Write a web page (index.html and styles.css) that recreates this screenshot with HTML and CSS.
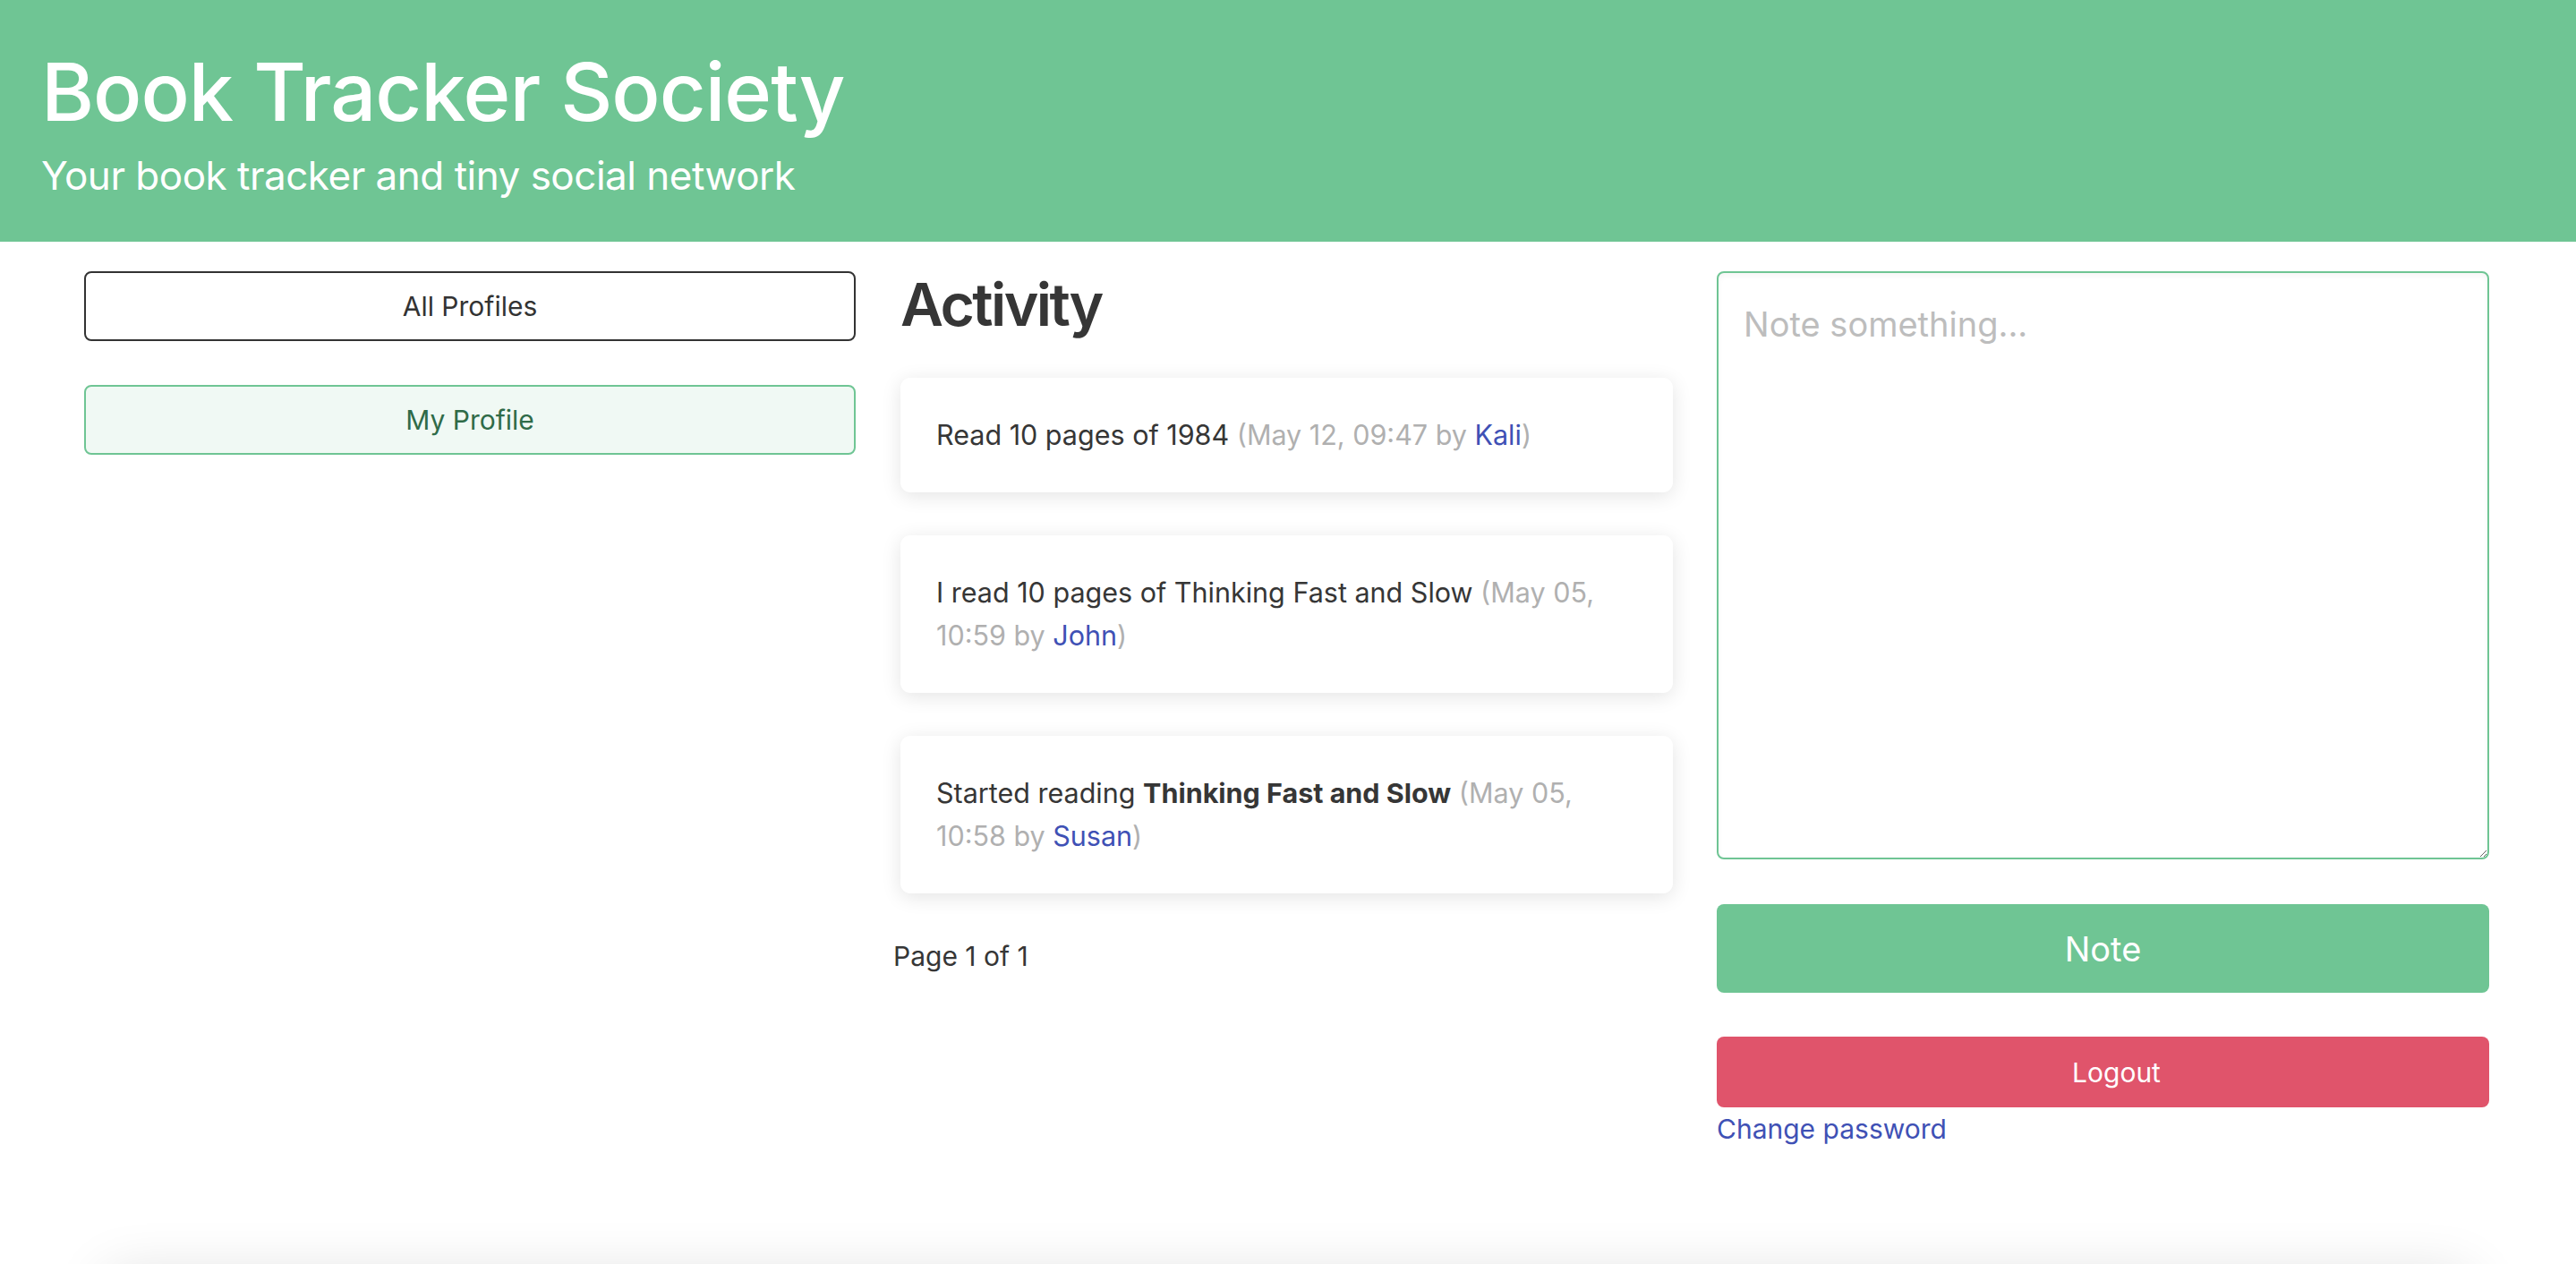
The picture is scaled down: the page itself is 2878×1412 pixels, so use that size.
FILE: index.html
```html
<!DOCTYPE html>
<html lang="en">
<head>
<meta charset="utf-8">
<title>Book Tracker Society</title>
<link rel="stylesheet" href="styles.css">
</head>
<body>
<header class="site-header">
  <h1 class="site-title">Book Tracker Society</h1>
  <p class="site-tagline">Your book tracker and tiny social network</p>
</header>
<main class="layout">
  <nav class="side-nav">
    <a class="nav-btn nav-btn-plain" href="#">All Profiles</a>
    <a class="nav-btn nav-btn-active" href="#">My Profile</a>
  </nav>
  <section class="activity">
    <h2 class="activity-title">Activity</h2>
    <article class="card">Read 10 pages of 1984 <span class="meta">(May 12, 09:47 by <a class="user" href="#">Kali</a>)</span></article>
    <article class="card">I read 10 pages of Thinking Fast and Slow <span class="meta">(May 05, 10:59 by <a class="user" href="#">John</a>)</span></article>
    <article class="card">Started reading <strong>Thinking Fast and Slow</strong> <span class="meta">(May 05, 10:58 by <a class="user" href="#">Susan</a>)</span></article>
    <p class="pager">Page 1 of 1</p>
  </section>
  <aside class="composer">
    <textarea class="note-input" placeholder="Note something..."></textarea>
    <button class="btn btn-note" type="button">Note</button>
    <button class="btn btn-logout" type="button">Logout</button>
    <a class="link" href="#">Change password</a>
  </aside>
</main>
<footer class="site-footer"></footer>
</body>
</html>
```
FILE: styles.css
```css
html, body {
  margin: 0;
  padding: 0;
  background: #ffffff;
}
body {
  font-family: Inter, "Noto Sans", "Liberation Sans", sans-serif;
  color: #363636;
  font-size: 32px;
  line-height: 48px;
}
.site-header {
  background: #6fc594;
  height: 270px;
  box-sizing: border-box;
  padding: 45px 46px 0;
  color: #ffffff;
}
.site-title {
  margin: 0;
  font-size: 90px;
  line-height: 115px;
  font-weight: 500;
  letter-spacing: -1px;
}
.site-tagline {
  margin: 8px 0 0;
  font-size: 44px;
  line-height: 56px;
  font-weight: 400;
  letter-spacing: -0.5px;
}
.layout {
  display: grid;
  grid-template-columns: 862px 878px 863px;
  column-gap: 42px;
  padding: 33px 0 0 94px;
  align-items: start;
}
.side-nav {
  display: flex;
  flex-direction: column;
  gap: 49px;
}
.nav-btn {
  display: flex;
  align-items: center;
  justify-content: center;
  height: 78px;
  box-sizing: border-box;
  border-radius: 8px;
  text-decoration: none;
  font-size: 30px;
}
.nav-btn-plain {
  border: 2px solid #333333;
  color: #333333;
  background: #ffffff;
}
.nav-btn-active {
  border: 2px solid #6fc594;
  color: #2f6b48;
  background: #f0f9f4;
}
.activity {
  display: flex;
  flex-direction: column;
}
.activity-title {
  margin: 1px 0 46px;
  font-size: 66px;
  line-height: 72px;
  font-weight: 600;
  letter-spacing: -2.6px;
  padding-left: 8px;
}
.card {
  margin: 0 7px 48px 8px;
  padding: 40px 40px;
  background: #ffffff;
  border-radius: 11px;
  box-shadow: 0 4px 22px rgba(0, 0, 0, 0.11);
  font-size: 30.5px;
}
.card strong {
  font-weight: 700;
}
.meta {
  color: #b0b0b0;
}
.user {
  color: #3f51b5;
  text-decoration: none;
}
.pager {
  margin: -2px 0 0;
  font-size: 30px;
}
.composer {
  display: flex;
  flex-direction: column;
}
.note-input {
  height: 657px;
  box-sizing: border-box;
  border: 2px solid #6fc594;
  border-radius: 8px;
  padding: 33px 28px;
  font-family: Inter, "Noto Sans", "Liberation Sans", sans-serif;
  font-size: 38px;
  line-height: 48px;
  color: #333333;
  box-shadow: inset 0 3px 6px rgba(0, 0, 0, 0.04);
  resize: vertical;
  outline: none;
}
.note-input::placeholder {
  color: #bdbdbd;
}
.btn {
  border: none;
  border-radius: 8px;
  color: #ffffff;
  font-family: Inter, "Noto Sans", "Liberation Sans", sans-serif;
  cursor: pointer;
}
.btn-note {
  margin-top: 50px;
  height: 99px;
  background: #6fc594;
  font-size: 38px;
}
.btn-logout {
  margin-top: 49px;
  height: 79px;
  padding-left: 36px;
  background: #e0546b;
  font-size: 30px;
}
.link {
  color: #3f51b5;
  text-decoration: none;
  font-size: 30px;
  line-height: 48px;
  align-self: flex-start;
}
.site-footer {
  margin: 140px 120px 0 120px;
  height: 200px;
  background: #ffffff;
  box-shadow: 0 0 60px rgba(0, 0, 0, 0.14);
}
```
